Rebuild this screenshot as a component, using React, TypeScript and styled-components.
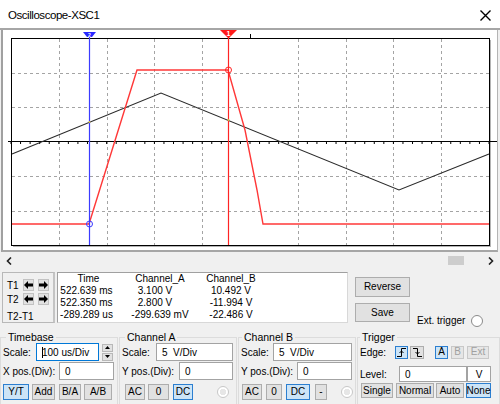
import React from "react";
import styled, { createGlobalStyle } from "styled-components";

const GlobalStyle = createGlobalStyle`
  html, body {
    margin: 0;
    padding: 0;
    background: #f0f0f0;
    overflow: hidden;
  }
  body {
    font-family: "Liberation Sans", Arial, sans-serif;
    font-size: 10px;
    color: #000;
  }
  * {
    box-sizing: border-box;
  }
`;

// plot geometry (page coordinates)
const PX = 11;
const PY = 38;
const PW = 478;
const PH = 207;

const vLines = [1, 2, 3, 4, 6, 7, 8, 9].map((i) => Math.round(PX + (PW / 10) * i) + 0.5);
const hLines = [1, 2, 4, 5].map((j) => Math.round(PY + (PH / 6) * j) + 0.5);
const ticks = Array.from({ length: 51 }, (_, k) => PX + (PW / 50) * k);

const rows = [
  { t: "522.639 ms", a: "3.100 V", b: "10.492 V", pa: 10 },
  { t: "522.350 ms", a: "2.800 V", b: "-11.994 V", pa: 10 },
  { t: "-289.289 us", a: "-299.639 mV", b: "-22.486 V", pa: 0 },
];

const Arrow = ({ dir }: { dir: "l" | "r" }) => (
  <svg width="9" height="8" viewBox="0 0 9 8">
    <path
      d="M0 4 L4 0 L4 2.5 L9 2.5 L9 5.5 L4 5.5 L4 8 Z"
      fill="#000"
      transform={dir === "r" ? "translate(9 0) scale(-1 1)" : undefined}
    />
  </svg>
);

const EdgeIcon = ({ rising }: { rising: boolean }) => (
  <svg width="9" height="9" viewBox="0 0 9 9">
    <path
      d={rising ? "M0 8.5 H4.5 V0.5 H9" : "M0 0.5 H4.5 V8.5 H9"}
      stroke="#000"
      fill="none"
      strokeWidth="1"
    />
    <path d={rising ? "M2.5 5 L4.5 3 L6.5 5" : "M2.5 4 L4.5 6 L6.5 4"} stroke="#000" fill="none" />
  </svg>
);

const Scope = () => (
  <svg width="494" height="220" viewBox="3 30 494 220">
    <rect x="3" y="30" width="494" height="220" fill="#fff" />
    <line x1="490.5" y1="40" x2="490.5" y2="247" stroke="#b4b4b4" />
    <line x1="13" y1="246.5" x2="491" y2="246.5" stroke="#b4b4b4" />
    <rect x={PX + 0.5} y={PY + 0.5} width={PW} height={PH} fill="#fff" stroke="#000" />
    {vLines.map((x) => (
      <line key={x} x1={x} y1={PY + 1} x2={x} y2={PY + PH} stroke="#a4a4a4" strokeDasharray="3 3" />
    ))}
    {hLines.map((y) => (
      <line key={y} x1={PX + 1} y1={y} x2={PX + PW} y2={y} stroke="#a4a4a4" strokeDasharray="3 3" />
    ))}
    <line x1="8" y1="141.5" x2="497" y2="141.5" stroke="#000" />
    {ticks.map((x) => (
      <line key={x} x1={x} y1="142" x2={x} y2="144" stroke="#000" />
    ))}
    <line x1="250.5" y1="34" x2="250.5" y2="38" stroke="#000" />

    <polyline
      points="12,154 161,93 399,190 489,154"
      fill="none"
      stroke="#2a2a2a"
      strokeWidth="1.1"
    />
    <polyline
      points="12,224 89,224 137,70 228,70 245,130 257,190 263,224 489,224"
      fill="none"
      stroke="#ff3838"
      strokeWidth="1.4"
    />

    <line x1="89.5" y1="34" x2="89.5" y2={PY + PH} stroke="#3b3bff" strokeWidth="1.2" />
    <line x1="228.5" y1="34" x2="228.5" y2={PY + PH} stroke="#ff2424" strokeWidth="1.2" />
    <polygon points="83,32 96,32 92,37 87,37" fill="#2828ff" />
    <text x="89.5" y="36.5" fontSize="5" fill="#fff" textAnchor="middle" fontWeight="bold">
      2
    </text>
    <polygon points="220,30 237,30 228.5,38.5" fill="#ff1a1a" />
    <text x="228.5" y="35.5" fontSize="7" fill="#fff" textAnchor="middle" fontWeight="bold">
      1
    </text>
    <circle cx="89.5" cy="224" r="3" fill="none" stroke="#3b3bff" />
    <circle cx="228.5" cy="70" r="3" fill="none" stroke="#ff2424" />
    <circle cx="89.5" cy="122" r="1" fill="#d8c040" />
    <circle cx="228.5" cy="120" r="1" fill="#d8c040" />
  </svg>
);

export default function App() {
  return (
    <>
      <GlobalStyle />
      <Window>
        <TitleBar>
          <Title>Oscilloscope-XSC1</Title>
          <CloseBox>
            <svg width="11" height="11" viewBox="0 0 11 11">
              <path d="M0.5 0.5 L10.5 10.5 M10.5 0.5 L0.5 10.5" stroke="#000" strokeWidth="1.4" fill="none" />
            </svg>
          </CloseBox>
        </TitleBar>

        <ScopeFrame>
          <Scope />
        </ScopeFrame>

        <ScrollBar>
          <svg width="6" height="8" viewBox="0 0 6 8">
            <path d="M5 0.5 L1.5 4 L5 7.5" stroke="#222" strokeWidth="1.6" fill="none" />
          </svg>
          <Track>
            <Thumb />
          </Track>
          <svg width="6" height="8" viewBox="0 0 6 8">
            <path d="M1 0.5 L4.5 4 L1 7.5" stroke="#222" strokeWidth="1.6" fill="none" />
          </svg>
        </ScrollBar>

        <MeasureRow>
          <CursorBox>
            <CursorRow>
              <CursorLabel>T1</CursorLabel>
              <ArrowBtn>
                <Arrow dir="l" />
              </ArrowBtn>
              <ArrowBtn>
                <Arrow dir="r" />
              </ArrowBtn>
            </CursorRow>
            <CursorRow>
              <CursorLabel>T2</CursorLabel>
              <ArrowBtn>
                <Arrow dir="l" />
              </ArrowBtn>
              <ArrowBtn>
                <Arrow dir="r" />
              </ArrowBtn>
            </CursorRow>
            <DiffLabel>T2-T1</DiffLabel>
          </CursorBox>

          <Readout>
            <Cell>Time</Cell>
            <Cell>Channel_A</Cell>
            <Cell>Channel_B</Cell>
            {rows.map((r) => (
              <React.Fragment key={r.t}>
                <Cell $pr={4}>{r.t}</Cell>
                <Cell $pr={r.pa}>{r.a}</Cell>
                <Cell>{r.b}</Cell>
              </React.Fragment>
            ))}
          </Readout>

          <ButtonCol>
            <Btn $w={55} $h={20}>Reverse</Btn>
            <Btn $w={55} $h={19}>Save</Btn>
          </ButtonCol>

          <ExtTrigger>
            Ext. trigger
            <Radio $dim={false} />
          </ExtTrigger>
        </MeasureRow>

        <Controls>
          <Group $w={118}>
            <Legend $ml={3}>Timebase</Legend>
            <Row>
              <Label $w={33}>Scale:</Label>
              <Field $w={63} $focus>
                <Caret />
                100 us/Div
              </Field>
              <Spinner>
                <SpinBtn>
                  <svg width="5" height="3" viewBox="0 0 5 3">
                    <path d="M0 3 L2.5 0 L5 3 Z" fill="#000" />
                  </svg>
                </SpinBtn>
                <SpinBtn>
                  <svg width="5" height="3" viewBox="0 0 5 3">
                    <path d="M0 0 L2.5 3 L5 0 Z" fill="#000" />
                  </svg>
                </SpinBtn>
              </Spinner>
            </Row>
            <Row $mt={1}>
              <Label $w={56}>X pos.(Div):</Label>
              <Field $w={55}>0</Field>
            </Row>
            <BtnRow $mt={4} $ml={0}>
              <Btn $w={26} $on>Y/T</Btn>
              <Btn $w={23} $gap={3}>Add</Btn>
              <Btn $w={22} $gap={4}>B/A</Btn>
              <Btn $w={28} $gap={3}>A/B</Btn>
            </BtnRow>
          </Group>

          <Group $w={118}>
            <Legend $ml={3}>Channel A</Legend>
            <Row>
              <Label $w={34}>Scale:</Label>
              <Field $w={77}>5  V/Div</Field>
            </Row>
            <Row $mt={1}>
              <Label $w={57}>Y pos.(Div):</Label>
              <Field $w={54}>0</Field>
            </Row>
            <BtnRow $mt={4} $ml={3}>
              <Btn $w={20}>AC</Btn>
              <Btn $w={21} $gap={3}>0</Btn>
              <Btn $w={20} $gap={4} $on>DC</Btn>
              <Radio $dim $gap={24} />
            </BtnRow>
          </Group>

          <Group $w={118}>
            <Legend $ml={1}>Channel B</Legend>
            <Row>
              <Label $w={32}>Scale:</Label>
              <Field $w={79}>5  V/Div</Field>
            </Row>
            <Row $mt={1}>
              <Label $w={56}>Y pos.(Div):</Label>
              <Field $w={55}>0</Field>
            </Row>
            <BtnRow $mt={4} $ml={1}>
              <Btn $w={20}>AC</Btn>
              <Btn $w={16} $gap={4}>0</Btn>
              <Btn $w={24} $gap={4} $on>DC</Btn>
              <Btn $w={12} $gap={5}>-</Btn>
              <Radio $dim $gap={14} />
            </BtnRow>
          </Group>

          <Group $w={143}>
            <Legend $ml={0}>Trigger</Legend>
            <Row>
              <Label $w={35}>Edge:</Label>
              <Btn $w={13} $h={13} $on>
                <EdgeIcon rising />
              </Btn>
              <Btn $w={14} $h={13} $gap={2}>
                <EdgeIcon rising={false} />
              </Btn>
              <Btn $w={13} $h={13} $gap={11} $on>A</Btn>
              <Btn $w={13} $h={13} $gap={3} $off>B</Btn>
              <Btn $w={22} $h={13} $gap={3} $off>Ext</Btn>
            </Row>
            <Row $mt={5} $h={16}>
              <Label $w={39}>Level:</Label>
              <Field $w={68} $h={16}>0</Field>
              <Field $w={24} $h={16} $center>V</Field>
            </Row>
            <BtnRow $mt={1} $ml={1}>
              <Btn $w={32} $h={15}>Single</Btn>
              <Btn $w={38} $h={15} $gap={3}>Normal</Btn>
              <Btn $w={28} $h={15} $gap={2}>Auto</Btn>
              <Btn $w={25} $h={15} $gap={2} $on>None</Btn>
            </BtnRow>
          </Group>
        </Controls>
      </Window>
    </>
  );
}

const Window = styled.div`
  width: 500px;
  height: 404px;
  overflow: hidden;
  background: #f0f0f0;
  display: flex;
  flex-direction: column;
`;

const TitleBar = styled.div`
  flex: none;
  height: 30px;
  background: #fff;
  border-bottom: 2px solid #a6a6a6;
  display: flex;
  align-items: center;
  padding: 2px 0 0 8px;
`;

const Title = styled.span`
  flex: 1;
  font-size: 11.5px;
  letter-spacing: -0.45px;
  color: #000;
`;

const CloseBox = styled.div`
  flex: none;
  width: 30px;
  height: 26px;
  display: flex;
  align-items: center;
  justify-content: center;
  svg {
    display: block;
  }
`;

const ScopeFrame = styled.div`
  flex: none;
  height: 222px;
  margin: 0 2px 0 1px;
  border-left: 2px solid #a0a0a0;
  border-right: 1px solid #b4b4b4;
  border-bottom: 2px solid #a6a6a6;
  background: #fff;
  display: flex;
  svg {
    display: block;
  }
`;

const ScrollBar = styled.div`
  flex: none;
  height: 17px;
  display: flex;
  align-items: center;
  padding: 0 6px 0 6px;
`;

const Track = styled.div`
  flex: 1;
  display: flex;
  justify-content: flex-end;
  padding-right: 24px;
`;

const Thumb = styled.div`
  width: 16px;
  height: 9px;
  background: #cdcdcd;
`;

const MeasureRow = styled.div`
  flex: none;
  height: 62px;
  display: flex;
  align-items: flex-start;
  padding: 3px 0 0 2px;
`;

const CursorBox = styled.div`
  width: 53px;
  height: 51px;
  margin-right: 2px;
  border: 1px solid #b8b8b8;
  border-right: 2px solid #c4c4c4;
  padding: 6px 0 0 4px;
  display: flex;
  flex-direction: column;
  gap: 2px;
`;

const CursorRow = styled.div`
  display: flex;
  align-items: center;
  height: 12px;
`;

const CursorLabel = styled.span`
  width: 19px;
`;

const ArrowBtn = styled.div`
  width: 11px;
  height: 12px;
  margin-right: 4px;
  background: #e1e1e1;
  border: 1px solid #c2c2c2;
  display: flex;
  align-items: center;
  justify-content: center;
`;

const DiffLabel = styled.div`
  margin-top: 4px;
  line-height: 12px;
`;

const Readout = styled.div`
  width: 291px;
  height: 51px;
  background: #fff;
  border: 1px solid #a0a0a0;
  border-right-color: #d8d8d8;
  border-bottom-color: #d8d8d8;
  display: grid;
  grid-template-columns: 61px 82px 60px;
  grid-auto-rows: 12px;
  align-content: start;
`;

const Cell = styled.div<{ $pr?: number }>`
  text-align: center;
  line-height: 12px;
  white-space: nowrap;
  padding-right: ${(p) => p.$pr ?? 0}px;
`;

const ButtonCol = styled.div`
  margin: 5px 0 0 7px;
  display: flex;
  flex-direction: column;
  gap: 6px;
`;

const ExtTrigger = styled.div`
  margin: 43px 0 0 7px;
  display: flex;
  align-items: center;
  gap: 6px;
  line-height: 12px;
`;

const Radio = styled.span<{ $dim: boolean; $gap?: number }>`
  flex: none;
  width: 12px;
  height: 12px;
  margin-left: ${(p) => p.$gap ?? 0}px;
  border-radius: 50%;
  border: 1px solid ${(p) => (p.$dim ? "#c8c8c8" : "#8a8a8a")};
  background: ${(p) => (p.$dim ? "radial-gradient(circle, #e6e6e6 0 3px, #fff 3.5px)" : "#fff")};
`;

const Controls = styled.div`
  flex: none;
  display: flex;
  gap: 1px;
  align-items: flex-start;
`;

const Group = styled.fieldset<{ $w: number }>`
  width: ${(p) => p.$w}px;
  height: 90px;
  margin: 0;
  padding: 0 0 0 2px;
  border: 1px solid #dcdcdc;
  min-width: 0;
  flex: none;
  display: flex;
  flex-direction: column;
`;

const Legend = styled.legend<{ $ml: number }>`
  margin-left: ${(p) => p.$ml}px;
  padding: 0 2px;
  line-height: 12px;
  font-size: 10.5px;
`;

const Row = styled.div<{ $mt?: number; $h?: number }>`
  display: flex;
  align-items: center;
  height: ${(p) => p.$h ?? 18}px;
  margin-top: ${(p) => p.$mt ?? 0}px;
`;

const BtnRow = styled.div<{ $mt: number; $ml: number }>`
  display: flex;
  align-items: center;
  margin-top: ${(p) => p.$mt}px;
  margin-left: ${(p) => p.$ml}px;
`;

const Label = styled.span<{ $w: number }>`
  flex: none;
  width: ${(p) => p.$w}px;
  white-space: nowrap;
`;

const Field = styled.div<{ $w: number; $h?: number; $focus?: boolean; $center?: boolean }>`
  flex: none;
  width: ${(p) => p.$w}px;
  height: ${(p) => p.$h ?? 18}px;
  background: #fff;
  border: 1px solid ${(p) => (p.$focus ? "#0078d7" : "#a3a3a3")};
  padding-left: ${(p) => (p.$center ? 0 : 5)}px;
  display: flex;
  align-items: center;
  justify-content: ${(p) => (p.$center ? "center" : "flex-start")};
  white-space: pre;
`;

const Caret = styled.span`
  display: inline-block;
  width: 1px;
  height: 11px;
  background: #000;
  margin-right: -1px;
`;

const Spinner = styled.div`
  margin-left: 3px;
  display: flex;
  flex-direction: column;
  gap: 1px;
`;

const SpinBtn = styled.div`
  width: 11px;
  height: 8px;
  background: #e1e1e1;
  border: 1px solid #b8b8b8;
  display: flex;
  align-items: center;
  justify-content: center;
`;

const Btn = styled.button<{
  $w: number;
  $h?: number;
  $on?: boolean;
  $off?: boolean;
  $gap?: number;
}>`
  flex: none;
  width: ${(p) => p.$w}px;
  height: ${(p) => p.$h ?? 16}px;
  margin: 0 0 0 ${(p) => p.$gap ?? 0}px;
  padding: 0;
  font-family: inherit;
  font-size: 10px;
  line-height: 1;
  color: ${(p) => (p.$off ? "#a0a0a0" : "#000")};
  background: ${(p) => (p.$on ? "#cce4f7" : p.$off ? "#e6e6e6" : "#e1e1e1")};
  border: 1px solid ${(p) => (p.$on ? "#2c7fd0" : p.$off ? "#c8c8c8" : "#adadad")};
  display: flex;
  align-items: center;
  justify-content: center;
`;
